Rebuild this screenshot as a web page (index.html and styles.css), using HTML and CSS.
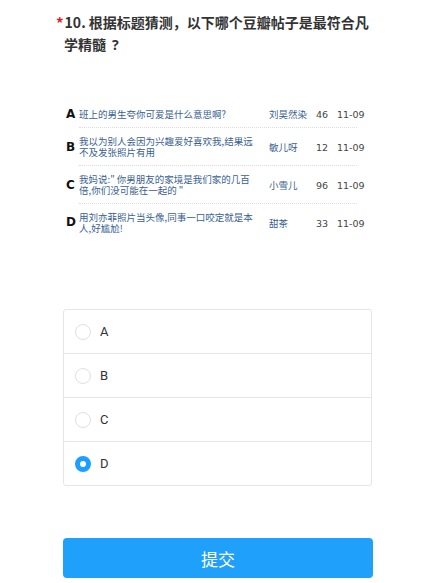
FILE: index.html
```html
<!DOCTYPE html>
<html lang="zh-CN">
<head>
    <meta charset="UTF-8">
    <meta name="viewport" content="width=device-width, initial-scale=1.0">
    <title>问卷</title>
    <link rel="stylesheet" href="styles.css">
</head>
<body>
    <div class="page">
        <div class="question">
            <span class="star">*</span>10. 根据标题猜测，以下哪个豆瓣帖子是最符合凡学精髓<span class="qmark">?</span>
        </div>

        <div class="posts">
            <div class="post">
                <div class="letter">A</div>
                <div class="line">
                    <div class="title">班上的男生夸你可爱是什么意思啊?</div>
                    <div class="author">刘昊然染</div>
                    <div class="count">46</div>
                    <div class="date">11-09</div>
                </div>
            </div>
            <div class="post">
                <div class="letter">B</div>
                <div class="line">
                    <div class="title">我以为别人会因为兴趣爱好喜欢我,结果远不及发张照片有用</div>
                    <div class="author">敏儿呀</div>
                    <div class="count">12</div>
                    <div class="date">11-09</div>
                </div>
            </div>
            <div class="post">
                <div class="letter">C</div>
                <div class="line">
                    <div class="title">我妈说:" 你男朋友的家境是我们家的几百倍,你们没可能在一起的 "</div>
                    <div class="author">小雪儿</div>
                    <div class="count">96</div>
                    <div class="date">11-09</div>
                </div>
            </div>
            <div class="post last">
                <div class="letter">D</div>
                <div class="line">
                    <div class="title">用刘亦菲照片当头像,同事一口咬定就是本人,好尴尬!</div>
                    <div class="author">甜茶</div>
                    <div class="count">33</div>
                    <div class="date">11-09</div>
                </div>
            </div>
        </div>

        <div class="options">
            <label class="option"><span class="radio"></span>A</label>
            <label class="option"><span class="radio"></span>B</label>
            <label class="option"><span class="radio"></span>C</label>
            <label class="option"><span class="radio checked"></span>D</label>
        </div>

        <button class="submit">提交</button>
    </div>
</body>
</html>
```

FILE: styles.css
```css
body {
    margin: 0;
    padding: 0;
    background-color: #fff;
    color: #333;
    font-family: "Noto Sans", "Noto Sans CJK SC", sans-serif;
}

.page {
    width: 309px;
    margin: 0 0 0 63px;
    padding-top: 11px;
}

.question {
    font-size: 14px;
    font-weight: bold;
    line-height: 22px;
    color: #333;
    padding-left: 1px;
    font-family: "Noto Sans CJK SC", sans-serif;
}

.qmark {
    margin-left: 6px;
    font-family: "Noto Sans", sans-serif;
}

.star {
    color: #e0201f;
    margin-left: -8px;
    margin-right: 1px;
    font-weight: bold;
    font-size: 15px;
    position: relative;
    top: 1px;
}

.posts {
    margin-top: 45px;
    padding-left: 3px;
    font-family: "DejaVu Sans", "Noto Sans CJK SC", sans-serif;
    font-size: 9.5px;
    line-height: 11px;
}

.post {
    display: flex;
    align-items: center;
}

.letter {
    width: 13px;
    font-size: 12px;
    font-weight: bold;
    color: #111;
}

.line {
    width: 278px;
    display: flex;
    align-items: center;
    padding: 8px 0 7px;
    border-bottom: 1px dotted #ddd;
}

.post.last .line {
    border-bottom: none;
}

.title {
    width: 180px;
    margin-right: 10px;
    color: #3a5f8f;
    font-family: "Noto Sans CJK SC", sans-serif;
}

.author {
    width: 47px;
    color: #3a5f8f;
    font-family: "Noto Sans CJK SC", sans-serif;
}

.count {
    width: 21px;
    color: #444;
}

.date {
    width: 20px;
    white-space: nowrap;
    color: #444;
}

.options {
    margin-top: 68px;
    border: 1px solid #e6e6e6;
    border-radius: 3px;
}

.option {
    display: flex;
    align-items: center;
    height: 43px;
    padding-left: 11px;
    border-top: 1px solid #e6e6e6;
    font-family: Roboto, "Noto Sans CJK SC", sans-serif;
    font-size: 13px;
    color: #333;
}

.option:first-child {
    border-top: none;
}

.radio {
    width: 16px;
    height: 16px;
    border: 1px solid #e0e0e0;
    border-radius: 50%;
    margin-right: 9px;
    box-sizing: border-box;
}

.radio.checked {
    border: 5px solid #1e9fff;
    background-color: #fff;
}

.submit {
    display: block;
    width: 310px;
    height: 40px;
    margin-top: 52px;
    border: none;
    border-radius: 4px;
    background-color: #1ea0fb;
    color: #fff;
    font-size: 17px;
    font-family: "Noto Sans CJK SC", sans-serif;
}
```
